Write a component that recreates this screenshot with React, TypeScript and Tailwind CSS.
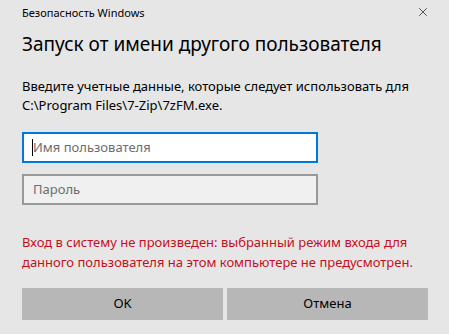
import { X } from 'lucide-react'

const font = { fontFamily: '"Noto Sans", "Open Sans", sans-serif' }

export default function App() {
  return (
    <div
      className="flex h-[334px] w-[449px] flex-col overflow-hidden bg-[#e6e6e6] pl-[22px] pr-[21px] text-black"
      style={font}
    >
      <div className="flex h-[21px] shrink-0 items-end justify-between pt-[5px]">
        <span className="text-[11px] leading-[16px]">Безопасность Windows</span>
        <X className="mb-[2px] mr-[-2px] h-[14px] w-[14px] text-[#222]" strokeWidth={1.3} />
      </div>

      <h1 className="mt-[9px] shrink-0 whitespace-nowrap text-[19px] leading-[28px]">
        Запуск от имени другого пользователя
      </h1>

      <p className="mt-[19px] shrink-0 whitespace-nowrap text-[13px] leading-[19px]">
        Введите учетные данные, которые следует использовать для
        <br />
        C:\Program Files\7-Zip\7zFM.exe.
      </p>

      <div className="mt-[17px] flex h-[31px] w-[296px] shrink-0 items-center border-2 border-[#0078d7] bg-white pl-[8px]">
        <span className="h-[17px] w-px bg-black" />
        <span className="text-[13px] text-[#6d6d6d]">Имя пользователя</span>
      </div>

      <div className="mt-[11px] flex h-[31px] w-[296px] shrink-0 items-center border-2 border-[#999] bg-[#f0f0f0] pl-[9px]">
        <span className="text-[13px] text-[#6d6d6d]">Пароль</span>
      </div>

      <p className="mt-[27px] shrink-0 whitespace-nowrap text-[13px] leading-[20px] text-[#c50f1f]">
        Вход в систему не произведен: выбранный режим входа для
        <br />
        данного пользователя на этом компьютере не предусмотрен.
      </p>

      <div className="mt-[16px] grid shrink-0 grid-cols-2 gap-[4px]">
        <button className="h-[32px] bg-[#b7b7b7] text-[13px]">OK</button>
        <button className="h-[32px] bg-[#b7b7b7] text-[13px]">Отмена</button>
      </div>
    </div>
  )
}
